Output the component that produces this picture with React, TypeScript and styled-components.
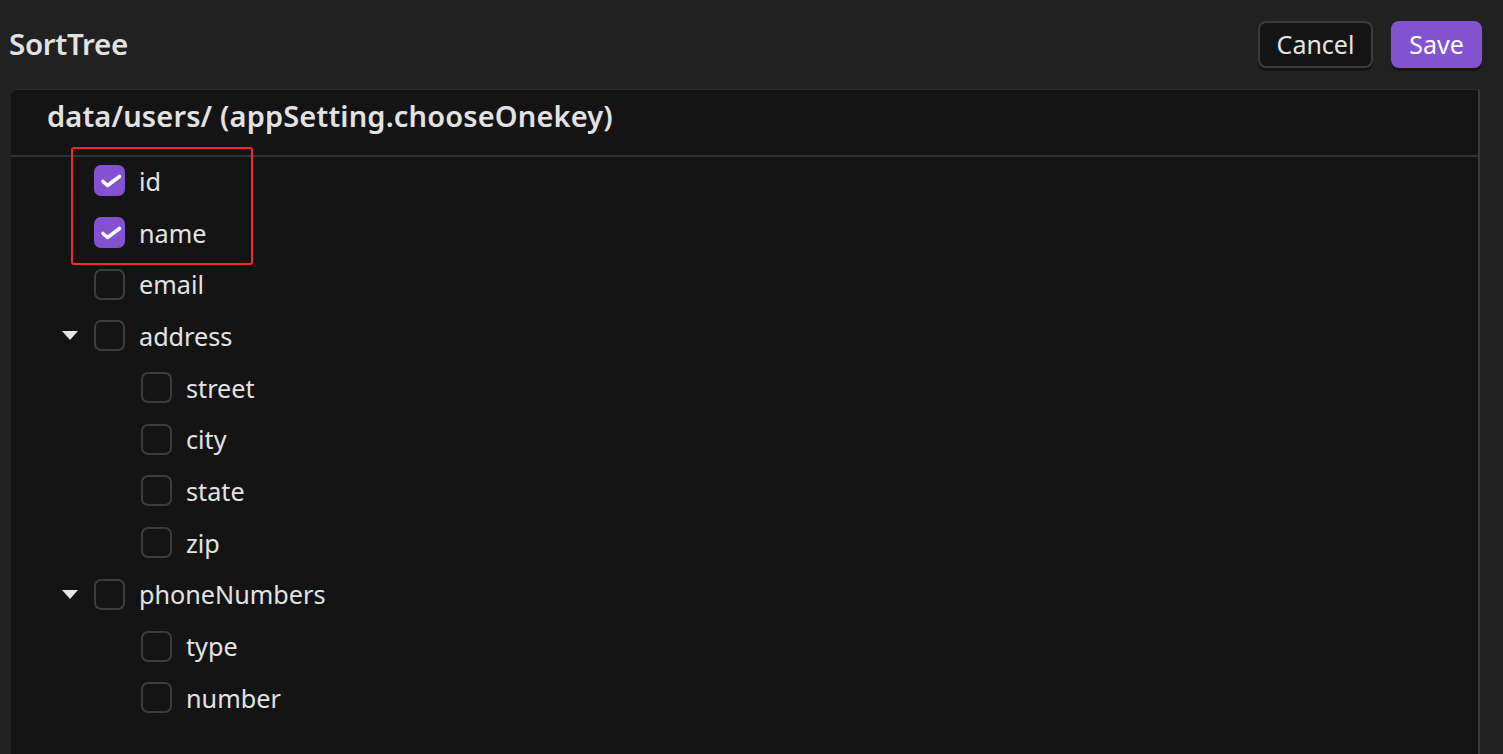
import {FC} from 'react'
import styled, {createGlobalStyle} from 'styled-components'

interface Node {
    name: string
    checked?: boolean
    children?: Node[]
}

const tree: Node[] = [
    {name: 'id', checked: true},
    {name: 'name', checked: true},
    {name: 'email'},
    {name: 'address', children: [{name: 'street'}, {name: 'city'}, {name: 'state'}, {name: 'zip'}]},
    {name: 'phoneNumbers', children: [{name: 'type'}, {name: 'number'}]},
]

const GlobalStyle = createGlobalStyle`
    html, body {
        margin: 0;
        padding: 0;
        background: #212121;
        overflow: hidden;
    }
    body {
        font-family: "Noto Sans", "Open Sans", "Liberation Sans", sans-serif;
        color: #e6e6e6;
    }
`

const CheckIcon = () => (
    <svg width="31" height="31" viewBox="0 0 31 31">
        <path d="M9 16.5 L13.5 20.5 L25.5 11.5" fill="none" stroke="#fff" strokeWidth="3.6" strokeLinecap="round"
              strokeLinejoin="round"/>
    </svg>
)

const Row: FC<{node: Node; level: number}> = ({node, level}) => (
    <>
        <TreeRow $level={level}>
            <Toggle>{node.children && <Caret/>}</Toggle>
            <Box $checked={!!node.checked}>{node.checked && <CheckIcon/>}</Box>
            <Label>{node.name}</Label>
        </TreeRow>
        {node.children?.map((c) => <Row key={c.name} node={c} level={level + 1}/>)}
    </>
)

const App: FC = () => (
    <Page>
        <GlobalStyle/>
        <TopBar>
            <Title>SortTree</Title>
            <Actions>
                <CancelButton>Cancel</CancelButton>
                <SaveButton>Save</SaveButton>
            </Actions>
        </TopBar>
        <Panel>
            <PanelHeader>data/users/ (appSetting.chooseOnekey)</PanelHeader>
            <Tree>
                {tree.map((n) => <Row key={n.name} node={n} level={0}/>)}
                <Highlight/>
            </Tree>
        </Panel>
    </Page>
)

const Page = styled.div`
    height: 100vh;
    display: flex;
    flex-direction: column;
`

const TopBar = styled.div`
    height: 89px;
    box-sizing: border-box;
    display: flex;
    align-items: center;
    justify-content: space-between;
    padding: 0 21px 0 9px;
    flex-shrink: 0;
`

const Title = styled.h1`
    margin: 0 0 2px;
    font-size: 29.5px;
    font-weight: 600;
    color: #e2e2e2;
    letter-spacing: -0.3px;
`

const Actions = styled.div`
    display: flex;
    gap: 18px;
    align-items: center;
`

const ButtonBase = styled.button`
    height: 47px;
    border-radius: 8px;
    font-family: inherit;
    font-size: 25px;
    padding: 0 0 2px;
    box-shadow: 0 3px 0 rgba(0, 0, 0, 0.35);
    cursor: pointer;
`

const CancelButton = styled(ButtonBase)`
    width: 115px;
    background: #141414;
    border: 2px solid #3b3b3b;
    color: #e4e4e4;
`

const SaveButton = styled(ButtonBase)`
    width: 91px;
    background: #8453d2;
    border: none;
    color: #ffffff;
`

const Panel = styled.div`
    flex: 1;
    margin-left: 11px;
    width: 1469px;
    background: #141414;
    border-top: 1px solid #2c2c2c;
    border-right: 2px solid #3a3a3a;
    border-top-left-radius: 6px;
    box-sizing: border-box;
`

const PanelHeader = styled.div`
    height: 67px;
    box-sizing: border-box;
    display: flex;
    align-items: center;
    padding: 0 0 14px 36px;
    font-size: 29px;
    font-weight: 600;
    color: #e2e2e2;
    letter-spacing: 0.15px;
    border-bottom: 2px solid #333333;
`

const Tree = styled.div`
    position: relative;
`

const TreeRow = styled.div<{ $level: number }>`
    height: 51.7px;
    display: flex;
    align-items: center;
    padding-left: ${(p) => 51 + p.$level * 47}px;
`

const Toggle = styled.div`
    width: 32px;
    display: flex;
    align-items: center;
`

const Caret = styled.span`
    width: 0;
    height: 0;
    border-left: 8px solid transparent;
    border-right: 8px solid transparent;
    border-top: 9px solid #e6e6e6;
    margin-top: -4px;
`

const Box = styled.div<{ $checked: boolean }>`
    width: 31px;
    height: 31px;
    box-sizing: border-box;
    border-radius: 7px;
    display: flex;
    align-items: center;
    justify-content: center;
    background: ${(p) => (p.$checked ? '#8452d1' : 'transparent')};
    border: ${(p) => (p.$checked ? 'none' : '2px solid #3d3d3d')};
    margin-top: -4px;
`

const Label = styled.span`
    margin-left: 14px;
    font-size: 25.2px;
    color: #e3e3e3;
    margin-top: -4px;
`

const Highlight = styled.div`
    position: absolute;
    left: 60px;
    top: -10px;
    width: 182px;
    height: 118px;
    box-sizing: border-box;
    border: 2px solid #f52a22;
    border-radius: 3px;
    pointer-events: none;
`

export default App
